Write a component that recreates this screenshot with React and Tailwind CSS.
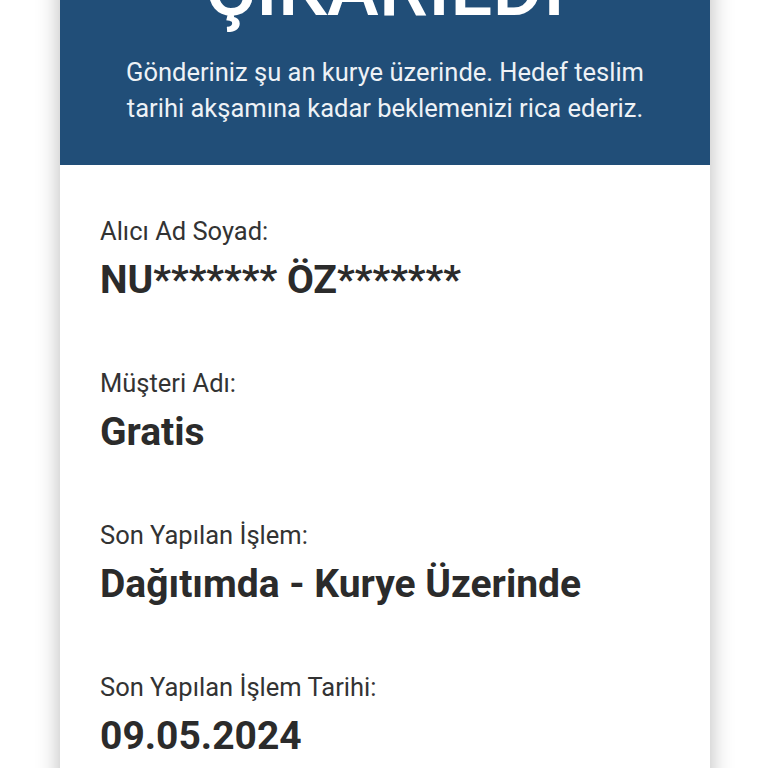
import React from "react";

const rows = [
  { label: "Alıcı Ad Soyad:", value: "NU******* ÖZ*******" },
  { label: "Müşteri Adı:", value: "Gratis" },
  { label: "Son Yapılan İşlem:", value: "Dağıtımda - Kurye Üzerinde" },
  { label: "Son Yapılan İşlem Tarihi:", value: "09.05.2024" },
];

export default function App() {
  return (
    <div className="min-h-screen bg-white overflow-hidden font-['Roboto','Liberation_Sans',sans-serif]">
      <div className="ml-[60px] w-[650px] bg-white shadow-[0_0_22px_rgba(0,0,0,0.28)]">
        <div className="bg-[#214e78] text-white text-center px-[50px] pb-[39px]">
          <h1 className="-mt-[50px] text-[78px] leading-none font-medium">ÇIKARILDI</h1>
          <p className="mt-[26px] text-[25.5px] leading-[36px] text-[#eef2f6]">
            Gönderiniz şu an kurye üzerinde. Hedef teslim tarihi akşamına kadar beklemenizi rica ederiz.
          </p>
        </div>
        <div className="px-[40px] pt-[51px] pb-[60px]">
          {rows.map((r) => (
            <div key={r.label} className="mb-[66px]">
              <div className="text-[25.5px] leading-[30px] text-[#333333]">{r.label}</div>
              <div className="mt-[12px] text-[39px] leading-[44px] font-bold text-[#2b2b2b]">{r.value}</div>
            </div>
          ))}
        </div>
      </div>
    </div>
  );
}
